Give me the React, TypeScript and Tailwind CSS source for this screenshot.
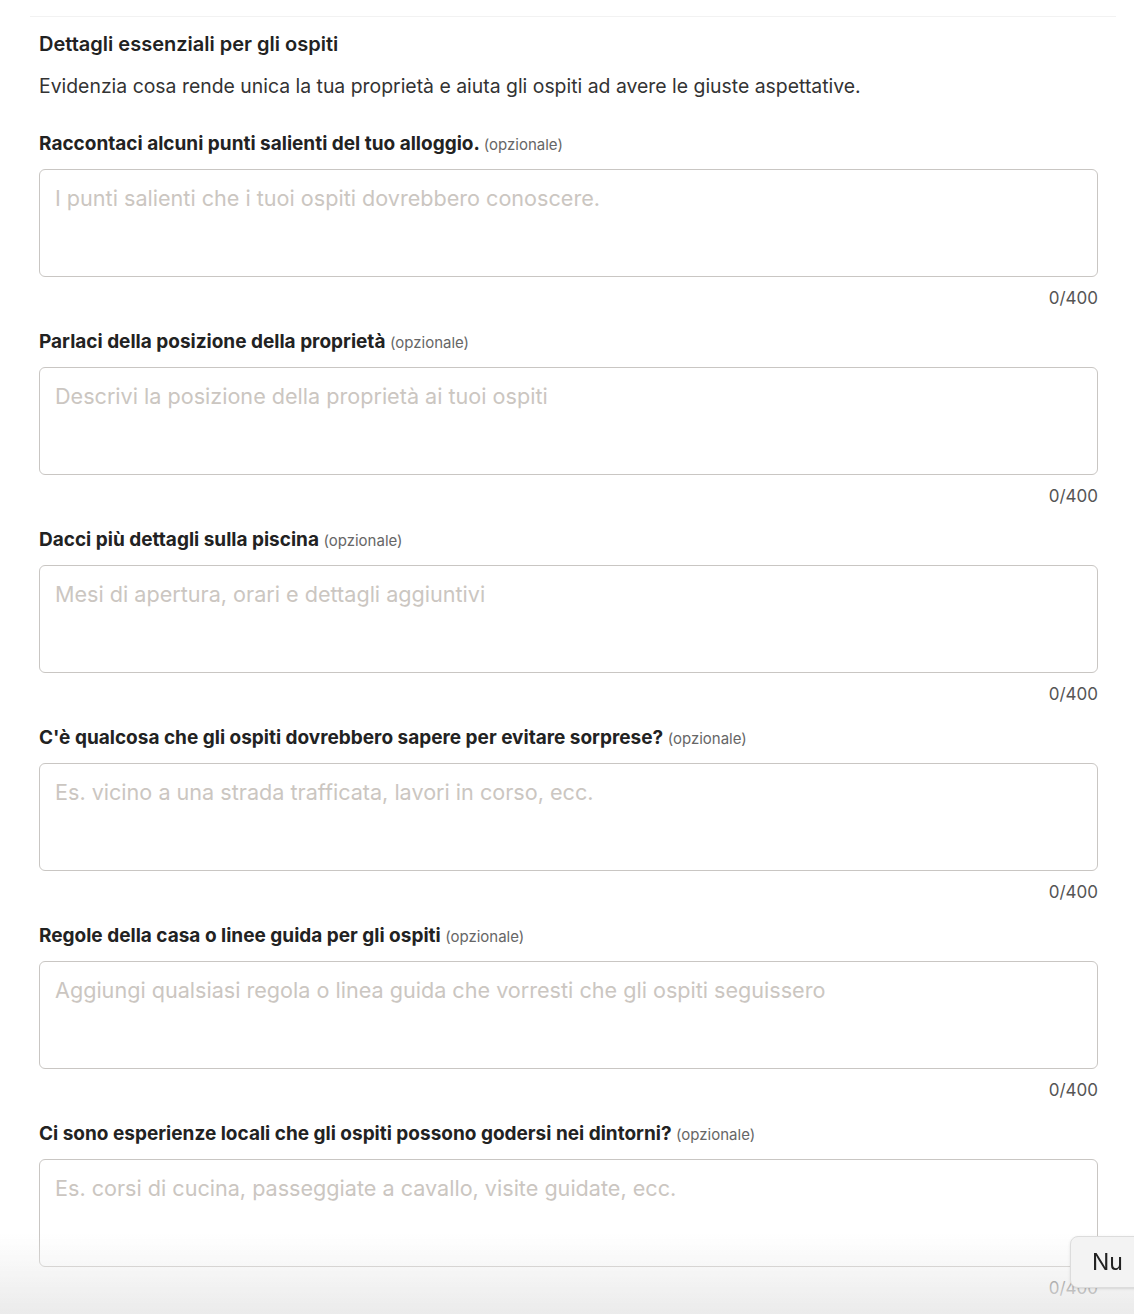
const fields = [
  {
    label: "Raccontaci alcuni punti salienti del tuo alloggio.",
    placeholder: "I punti salienti che i tuoi ospiti dovrebbero conoscere.",
  },
  {
    label: "Parlaci della posizione della proprietà",
    placeholder: "Descrivi la posizione della proprietà ai tuoi ospiti",
  },
  {
    label: "Dacci più dettagli sulla piscina",
    placeholder: "Mesi di apertura, orari e dettagli aggiuntivi",
  },
  {
    label: "C'è qualcosa che gli ospiti dovrebbero sapere per evitare sorprese?",
    placeholder: "Es. vicino a una strada trafficata, lavori in corso, ecc.",
  },
  {
    label: "Regole della casa o linee guida per gli ospiti",
    placeholder: "Aggiungi qualsiasi regola o linea guida che vorresti che gli ospiti seguissero",
  },
  {
    label: "Ci sono esperienze locali che gli ospiti possono godersi nei dintorni?",
    placeholder: "Es. corsi di cucina, passeggiate a cavallo, visite guidate, ecc.",
  },
];

function Field({ label, placeholder }: { label: string; placeholder: string }) {
  return (
    <div className="flex flex-col">
      <label className="block h-[26px] text-[19px] font-bold leading-[26px] text-[#222]">
        {label} <span className="text-[15px] leading-none font-normal text-[#666]">(opzionale)</span>
      </label>
      <textarea
        placeholder={placeholder}
        className="mt-[12px] block h-[108px] w-full resize-none rounded-md border border-[#c9c6c3] px-[15px] py-[14px] text-[21.6px] leading-[28px] text-[#222] outline-none placeholder:text-[#cbc6c1]"
      />
      <div className="mt-[9px] h-[24px] text-right text-[17px] leading-[24px] text-[#555]">0/400</div>
    </div>
  );
}

export default function App() {
  return (
    <div className="relative min-h-[1314px] overflow-hidden bg-white font-['Inter','Noto_Sans',sans-serif]">
      <div className="px-[30px] pt-4">
        <div className="mr-[-12px] border-t border-[#f2f2f2] pl-[9px] pr-[18px] pt-[13px]">
          <h2 className="text-[20px] font-semibold leading-[28px] text-[#222]">
            Dettagli essenziali per gli ospiti
          </h2>
          <p className="mt-[14px] text-[19.4px] leading-[28px] text-[#333]">
            Evidenzia cosa rende unica la tua proprietà e aiuta gli ospiti ad avere le giuste aspettative.
          </p>
          <div className="mt-[31px] flex flex-col gap-[19px] pb-10">
            {fields.map((f) => (
              <Field key={f.label} label={f.label} placeholder={f.placeholder} />
            ))}
          </div>
        </div>
      </div>
      <div className="pointer-events-none fixed inset-x-0 bottom-0 h-[80px] bg-gradient-to-b from-white/0 to-[#ebebeb]" />
      <button className="fixed bottom-[26px] left-[1070px] h-[52px] w-[120px] rounded-lg border border-[#dcdcdc] bg-[#f3f3f3] pl-[21px] text-left text-[23px] text-[#222] shadow-sm">
        Nu
      </button>
    </div>
  );
}
